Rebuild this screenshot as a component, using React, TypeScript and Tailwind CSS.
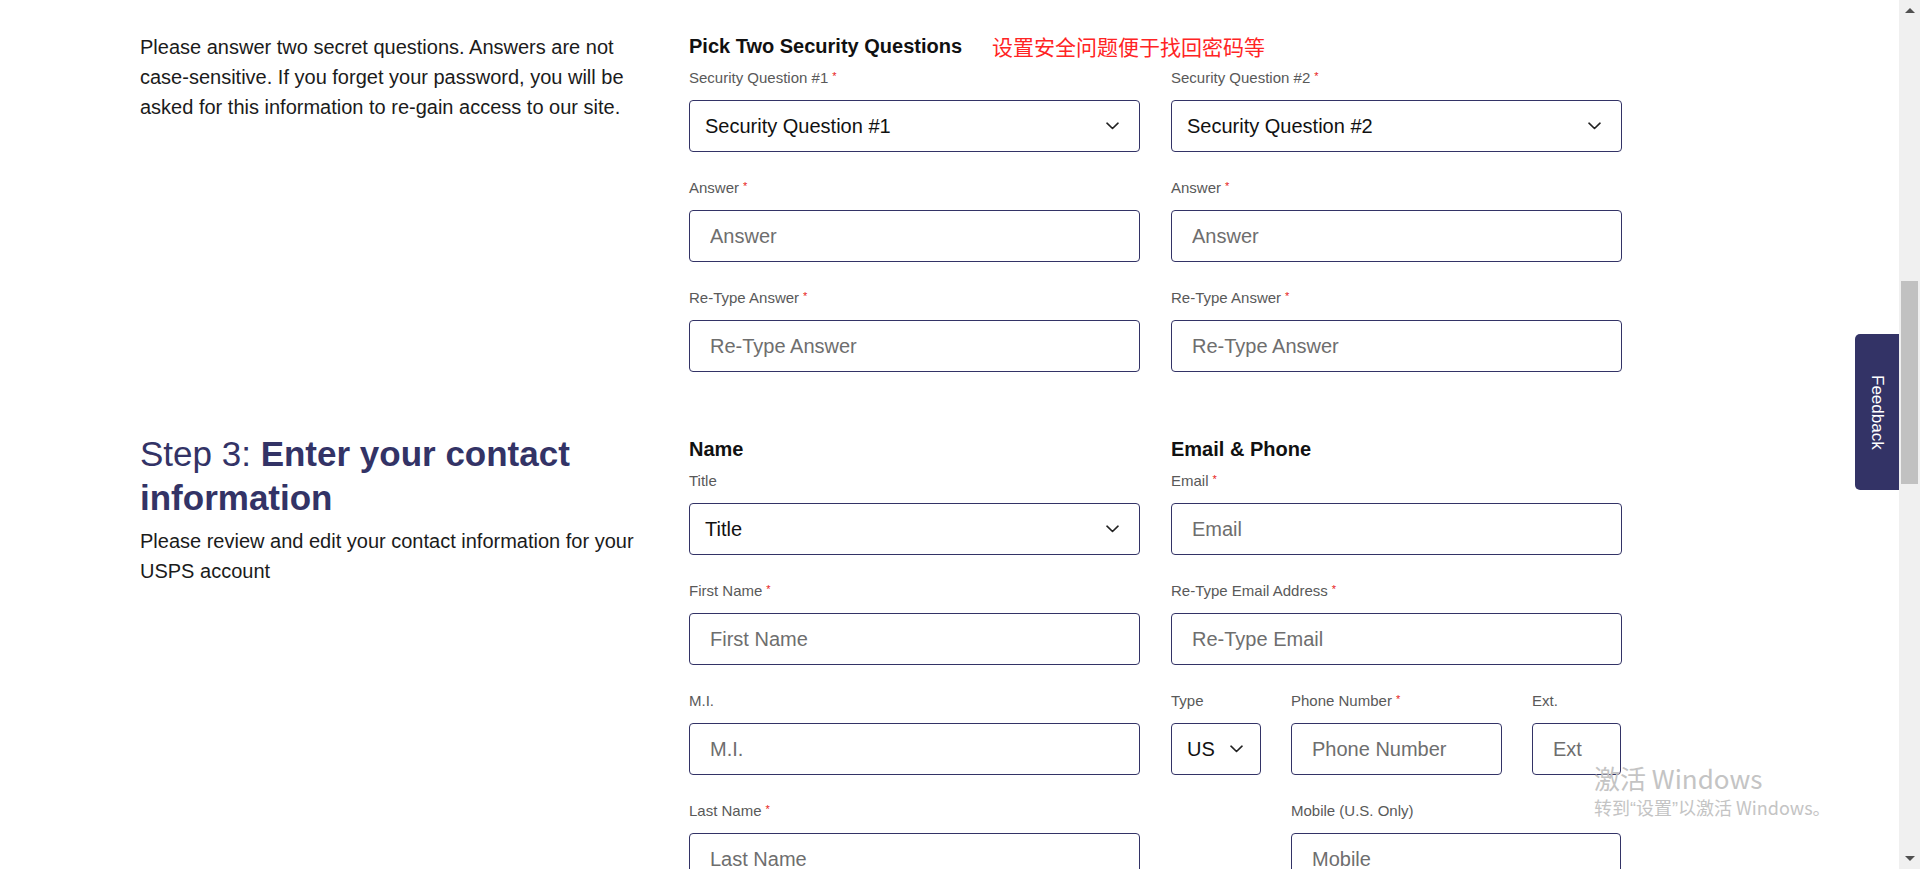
import React from 'react'

function Req() {
  return <span className="relative -top-[3px] ml-[4px] text-[11px] leading-[14px] text-[#e71921]">*</span>
}

function Label({ text, req }: { text: string; req?: boolean }) {
  return (
    <div className="mb-[12px] h-[20px] text-[15px] leading-[20px] text-[#595959] whitespace-nowrap">
      {text}
      {req && <Req />}
    </div>
  )
}

function Chevron() {
  return (
    <svg width="13" height="8" viewBox="0 0 13 8" fill="none">
      <path d="M1 1.2 L6.5 6.5 L12 1.2" stroke="#222" strokeWidth="1.6" strokeLinecap="round" strokeLinejoin="round" />
    </svg>
  )
}

function Select({ label, value, req, small }: { label: string; value: string; req?: boolean; small?: boolean }) {
  return (
    <div className="mb-[26px]">
      <Label text={label} req={req} />
      <div
        className={
          small
            ? 'flex h-[52px] items-center justify-between rounded-[4px] border border-[#333366] pl-[15px] pr-[17px] text-[20px] text-[#111]'
            : 'flex h-[52px] items-center justify-between rounded-[4px] border border-[#333366] pl-[15px] pr-[20px] text-[20px] text-[#111]'
        }
      >
        <span>{value}</span>
        <Chevron />
      </div>
    </div>
  )
}

function Field({ label, placeholder, req }: { label: string; placeholder: string; req?: boolean }) {
  return (
    <div className="mb-[26px]">
      <Label text={label} req={req} />
      <input
        placeholder={placeholder}
        className="block h-[52px] w-full rounded-[4px] border border-[#333366] pl-[20px] text-[20px] text-[#111] outline-none placeholder:text-[#6e6e6e]"
      />
    </div>
  )
}

export default function App() {
  return (
    <div className="flex h-[869px] w-[1920px] overflow-hidden bg-white font-['Liberation_Sans',Arial,sans-serif]">
      <main className="relative flex-1 overflow-hidden">
        <div className="pl-[140px] pt-[32px]">
          {/* security questions */}
          <section className="flex">
            <div className="w-[549px]">
              <p className="w-[510px] text-[20px] leading-[30px] text-[#1b1b1b]">
                Please answer two secret questions. Answers are not case-sensitive. If you forget your password, you will be asked for this information to re-gain access to our site.
              </p>
            </div>
            <div className="pt-[2px]">
              <div className="flex items-center">
                <h3 className="text-[20px] font-bold leading-[24px] text-[#111]">Pick Two Security Questions</h3>
                <span className="ml-[30px] font-['Noto_Sans_CJK_SC',sans-serif] text-[21px] leading-[24px] text-[#ff2424]">
                  设置安全问题便于找回密码等
                </span>
              </div>
              <div className="mt-[10px] grid grid-cols-[451px_451px] gap-x-[31px]">
                <div>
                  <Select label="Security Question #1" value="Security Question #1" req />
                  <Field label="Answer" placeholder="Answer" req />
                  <Field label="Re-Type Answer" placeholder="Re-Type Answer" req />
                </div>
                <div>
                  <Select label="Security Question #2" value="Security Question #2" req />
                  <Field label="Answer" placeholder="Answer" req />
                  <Field label="Re-Type Answer" placeholder="Re-Type Answer" req />
                </div>
              </div>
            </div>
          </section>

          {/* step 3 */}
          <section className="mt-[34px] flex">
            <div className="w-[549px]">
              <h2 className="w-[510px] text-[35px] leading-[44px] text-[#333366]">
                Step 3: <span className="font-bold">Enter your contact information</span>
              </h2>
              <p className="mt-[6px] w-[510px] text-[20px] leading-[30px] text-[#1b1b1b]">
                Please review and edit your contact information for your USPS account
              </p>
            </div>
            <div className="pt-[5px]">
              <div className="grid grid-cols-[451px_451px] gap-x-[31px]">
                <div>
                  <h3 className="mb-[10px] text-[20px] font-bold leading-[24px] text-[#111]">Name</h3>
                  <Select label="Title" value="Title" />
                  <Field label="First Name" placeholder="First Name" req />
                  <Field label="M.I." placeholder="M.I." />
                  <Field label="Last Name" placeholder="Last Name" req />
                </div>
                <div>
                  <h3 className="mb-[10px] text-[20px] font-bold leading-[24px] text-[#111]">Email &amp; Phone</h3>
                  <Field label="Email" placeholder="Email" req />
                  <Field label="Re-Type Email Address" placeholder="Re-Type Email" req />
                  <div className="grid grid-cols-[90px_211px_89px] gap-x-[30px]">
                    <Select label="Type" value="US" small />
                    <Field label="Phone Number" placeholder="Phone Number" req />
                    <Field label="Ext." placeholder="Ext" />
                    <div className="col-span-2 col-start-2">
                      <Field label="Mobile (U.S. Only)" placeholder="Mobile" />
                    </div>
                  </div>
                </div>
              </div>
            </div>
          </section>
        </div>

        {/* feedback tab */}
        <div className="absolute right-0 top-[334px] flex h-[156px] w-[44px] items-center justify-center rounded-l-[5px] bg-[#333366]">
          <span className="text-[17px] text-white [writing-mode:vertical-rl]">Feedback</span>
        </div>

        {/* windows watermark */}
        <div className="pointer-events-none absolute left-[1594px] top-[762px] font-['Noto_Sans_CJK_SC',sans-serif] text-[#c4c4c4]">
          <div className="text-[26px] leading-[32px]">激活 Windows</div>
          <div className="text-[18px] leading-[26px]">
            转到<span className="font-['Liberation_Sans',sans-serif]">“</span>设置<span className="font-['Liberation_Sans',sans-serif]">”</span>以激活 Windows。
          </div>
        </div>
      </main>

      {/* scrollbar */}
      <div className="flex h-full w-[21px] flex-col items-center bg-[#f0f0f0]">
        <div className="flex h-[21px] items-center justify-center">
          <div className="h-0 w-0 border-x-[5px] border-b-[5px] border-x-transparent border-b-[#505050]" />
        </div>
        <div className="mt-[260px] h-[203px] w-[17px] bg-[#c1c1c1]" />
        <div className="flex-1" />
        <div className="flex h-[21px] items-center justify-center">
          <div className="h-0 w-0 border-x-[5px] border-t-[5px] border-x-transparent border-t-[#505050]" />
        </div>
      </div>
    </div>
  )
}
